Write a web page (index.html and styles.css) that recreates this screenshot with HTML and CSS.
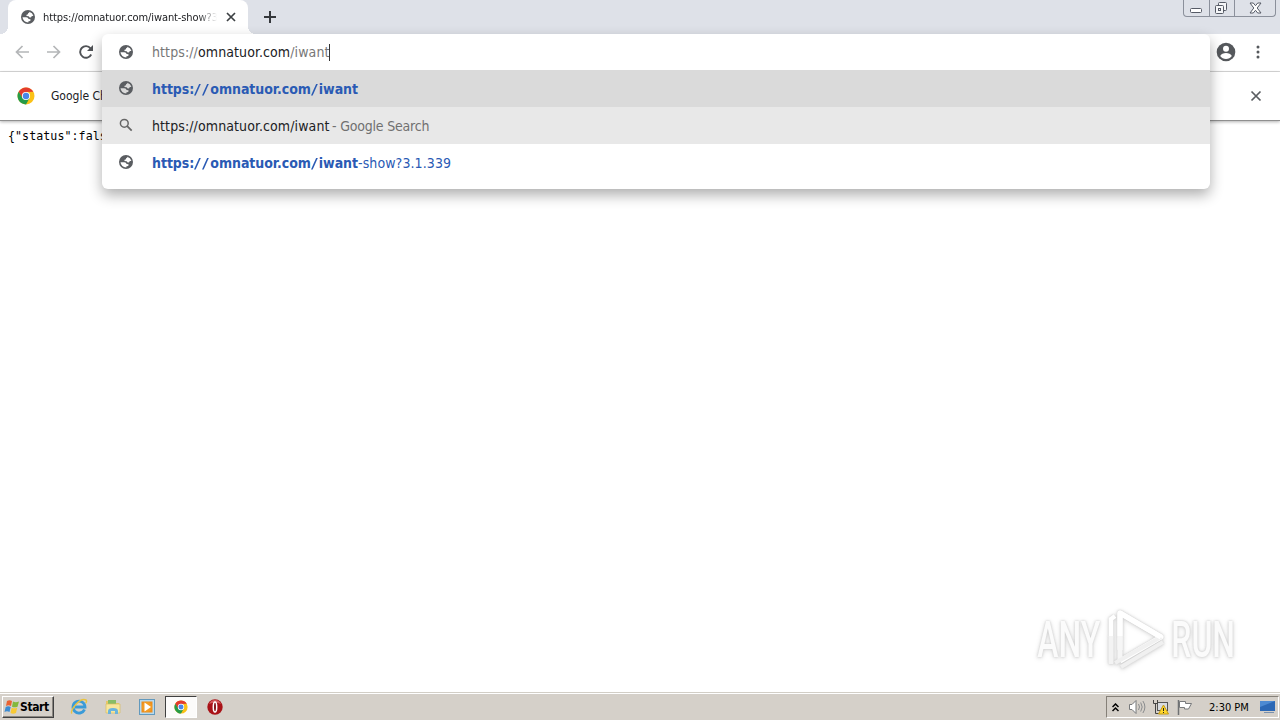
FILE: index.html
```
<!DOCTYPE html>
<html lang="en">
<head>
  <meta charset="UTF-8">
  <meta name="viewport" content="width=device-width, initial-scale=1.0">
  <title>omnatuor.com/iwant</title>
  <link rel="stylesheet" href="styles.css">
</head>
<body>
  <svg class="defs" width="0" height="0">
    <symbol id="globe" viewBox="0 0 16 16">
      <path fill="#5a5d61" fill-rule="evenodd" d="M8 1a7 7 0 1 0 0 14A7 7 0 1 0 8 1zM9.200 2.700Q12.500 3.500 13.400 6.800L11.600 7.200Q11.200 8.800 9.700 8.400L8.600 7.300 6.400 7 6.600 5.700 8 5.200 8.200 4 9.300 3.700zM2.500 8.200L6.300 8.200Q8.300 8.500 8.600 10L10.500 10.300 10.300 11.900 8.500 12.300 8.300 13.500Q3.200 13.200 2.500 8.200z"/>
    </symbol>
    <symbol id="chrome" viewBox="0 0 18 18">
      <circle cx="9" cy="9" r="8.500" fill="#fbc116"/>
      <path d="M9 9 5 11.300 1.640 4.750A8.500 8.500 0 0 1 16.360 4.750L9 5z" fill="#e33b2e"/>
      <path d="M1.640 4.750A8.500 8.500 0 0 0 9 17.500L12.600 11 9 9 5.500 11z" fill="#269b48"/>
      <circle cx="9" cy="9" r="4.100" fill="#fff"/>
      <circle cx="9" cy="9" r="3.200" fill="#4a86e8"/>
    </symbol>
  </svg>

  <div class="tabstrip">
    <div class="tab">
      <svg class="icon" width="16" height="16"><use href="#globe"/></svg>
      <span class="tab-title">https://omnatuor.com/iwant-show?3</span>
      <svg class="tab-close" width="10" height="10" viewBox="0 0 10 10"><path d="M1 1l8 8M9 1l-8 8" stroke="#3c4043" stroke-width="1.700"/></svg>
    </div>
    <svg class="new-tab" width="12" height="12" viewBox="0 0 12 12"><path d="M6 0v12M0 6h12" stroke="#35383c" stroke-width="2"/></svg>
    <div class="window-buttons">
      <span class="min"><svg width="13" height="6" viewBox="0 0 13 6"><rect x=".5" y=".5" width="11" height="4" rx="1" fill="#fff" stroke="#565b66"/></svg></span>
      <span class="restore"><svg width="14" height="14" viewBox="0 0 14 14"><g fill="#f5f6f8" stroke="#565b66"><rect x="4.500" y="1.500" width="8" height="8" rx="1"/><rect x="1.500" y="4.500" width="8" height="8" rx="1"/><rect x="4.500" y="7.500" width="2" height="2"/></g></svg></span>
      <span class="close"><svg width="13" height="12" viewBox="0 0 13 12"><path d="M1 1h3.300l2.200 2.700L8.700 1H12L8.200 6l3.800 5H8.700L6.500 8.300 4.300 11H1l3.800-5z" fill="#fff" stroke="#565b66"/></svg></span>
    </div>
  </div>

  <div class="toolbar">
    <svg width="14" height="14" viewBox="0 0 14 14"><path d="M14 7H1.500M7.500 1l-6 6 6 6" fill="none" stroke="#b4b6b8" stroke-width="1.700"/></svg>
    <svg width="14" height="14" viewBox="0 0 14 14"><path d="M0 7h12.500M6.500 1l6 6-6 6" fill="none" stroke="#b4b6b8" stroke-width="1.700"/></svg>
    <svg width="14" height="14" viewBox="0 0 14 14"><path d="M12.200 9.500a5.800 5.800 0 1 1-.7-6.200" fill="none" stroke="#505357" stroke-width="1.900"/><path d="M14 0v6H8z" fill="#505357"/></svg>
    <svg class="profile" width="20" height="20" viewBox="0 0 20 20"><circle cx="10" cy="10" r="9.300" fill="#55585c"/><circle cx="10" cy="6.800" r="3" fill="#fff"/><path d="M4.200 14c.6-2 3.500-3 5.800-3s5.200 1 5.800 3c-1.300 1.900-3.400 3-5.800 3s-4.500-1.100-5.800-3z" fill="#fff"/></svg>
    <svg class="menu" width="4" height="14" viewBox="0 0 4 14" fill="#55585c"><circle cx="2" cy="2" r="1.500"/><circle cx="2" cy="7" r="1.500"/><circle cx="2" cy="12" r="1.500"/></svg>
  </div>

  <div class="infobar">
    <svg width="18" height="18"><use href="#chrome"/></svg>
    <span class="infobar-text">Google Chrome</span>
    <svg class="infobar-close" width="12" height="12" viewBox="0 0 12 12"><path d="M1.500 1.500l9 9M10.500 1.500l-9 9" stroke="#5a5d61" stroke-width="1.700"/></svg>
  </div>

  <div class="page">
    <pre>{"status":false}</pre>
    <div class="watermark">
      <span>ANY</span>
      <svg width="60" height="66" viewBox="0 0 60 66">
        <path d="M15 44V7l41 24-41 24" fill="none" stroke="#fff" stroke-width="5" stroke-linejoin="round"/>
        <path d="M15 7v48" stroke="#f6f6f6" stroke-width="5"/>
        <path d="M6 57V13l4-3" fill="none" stroke="#fff" stroke-width="4.500"/>
        <path d="M6 30v28" stroke="#f3f3f3" stroke-width="4.500"/>
        <path d="M10 57l46-26M16 61l42-25" stroke="#f0f0f0" stroke-width="4"/>
        <path d="M15 30V7l41 24" fill="none" stroke="#fff" stroke-width="5" stroke-linejoin="round"/>
      </svg>
      <span>RUN</span>
    </div>
  </div>

  <div class="taskbar">
    <div class="start">
      <svg width="16" height="16" viewBox="0 0 16 16"><path d="M3 2q2.500-1.500 5 0L7 7q-2.500-1.300-5 0z" fill="#ea6232"/><path d="M9 2.500q2.500 1.300 6 0L13.500 7.700q-3 1.300-5.500 0z" fill="#83b83c"/><path d="M1.700 8q2.500-1.300 5 0l-1.200 5q-2.500-1.400-5 0z" fill="#3c8bd2"/><path d="M7.700 8.700q2.500 1.300 5.500 0L12 14q-3 1.300-5.500 0z" fill="#f8c934"/></svg>
      <span>Start</span>
    </div>
    <div class="quick">
      <svg width="18" height="18" viewBox="0 0 18 18"><path d="M14.500 11.500A6 6 0 1 1 15 9H5" fill="none" stroke="#3a9bd8" stroke-width="2.800"/><path d="M2 15.500C-1 13 10-1 16 2c1 .5.500 2-.3 3.200" fill="none" stroke="#e9c33f" stroke-width="1.400"/></svg>
    </div>
    <div class="quick">
      <svg width="18" height="18" viewBox="0 0 18 18"><path d="M2 3h5l1 2h7v9H2z" fill="#e8c765"/><path d="M4 2h8v4H4z" fill="#88bd66"/><path d="M2 6h14v9H2z" fill="#f7e69c" stroke="#d9bd62" stroke-width=".7"/><path d="M4 16v-3q0-3 5-3t5 3v3h-3v-3H7v3z" fill="#6ab4dd"/></svg>
    </div>
    <div class="quick">
      <svg width="18" height="18" viewBox="0 0 18 18"><rect x="1.500" y="1.500" width="15" height="15" fill="#b6d9ef" stroke="#6299bd"/><rect x="3.500" y="3.500" width="11" height="11" fill="#ee8d1b"/><circle cx="9" cy="9" r="5" fill="#f39c24"/><path d="M6.500 4.500v9L13 9z" fill="#fff"/></svg>
    </div>
    <div class="quick active">
      <svg width="14" height="14"><use href="#chrome"/></svg>
    </div>
    <div class="quick">
      <svg width="18" height="18" viewBox="0 0 18 18"><circle cx="9" cy="9" r="7.700" fill="#a91217"/><path d="M3 6a6.500 6.500 0 0 1 12 0q-6-3-12 0z" fill="#d3595a"/><ellipse cx="9" cy="9" rx="1.700" ry="5" fill="#7c0d10" stroke="#fff" stroke-width="1.500"/></svg>
    </div>
    <div class="tray">
      <svg class="chevrons" width="7" height="9" viewBox="0 0 7 9"><path d="M.5 4l3-3 3 3M.5 8l3-3 3 3" fill="none" stroke="#000" stroke-width="1.500"/></svg>
      <svg width="18" height="16" viewBox="0 0 18 16"><path d="M1.500 5.500H4L8 1.500v13l-4-4H1.500z" fill="#fff" stroke="#77797b"/><path d="M10.500 5q2 3 0 6M12.700 3.500q3 4.500 0 9M14.900 2q4 6 0 12" fill="none" stroke="#8a8c8e"/></svg>
      <svg width="18" height="16" viewBox="0 0 18 16"><rect x="5.500" y="3.500" width="10" height="8" fill="#d8dbe0" stroke="#555"/><path d="M1.500 1v3.500h4V1M3.500 4.500v10h4" fill="none" stroke="#444"/><path d="M11.500 6l5 9h-10z" fill="#ffd72c" stroke="#c49a13"/><path d="M11.500 9v3M11.500 13v1" stroke="#222"/></svg>
      <svg width="18" height="16" viewBox="0 0 18 16"><path d="M2.500 1v15" stroke="#6f7173" stroke-width="1.500"/><path d="M3.500 2.500h6v2h6l-3 5.500H8.500V8.500h-5z" fill="#fff" stroke="#77797b"/></svg>
      <span class="clock">2:30 PM</span>
      <svg class="desktop" width="18" height="14" viewBox="0 0 18 14"><path d="M1 1h15v10H1z" fill="#2c68b5"/><path d="M1 1h15L1 7z" fill="#4d8ad2"/><path d="M5 12.500h10" stroke="#7990ad"/></svg>
    </div>
  </div>

  <div class="omnibox">
    <div class="row input">
      <svg class="icon" width="16" height="16"><use href="#globe"/></svg>
      <span class="url"><i>https://</i>omnatuor.com<i>/iwant</i></span><span class="caret"></span>
    </div>
    <div class="row selected">
      <svg class="icon" width="16" height="16"><use href="#globe"/></svg>
      <span class="link"><b>https:<span class="slash">/</span><span class="slash">/</span>omnatuor.com<span class="slash">/</span>iwant</b></span>
    </div>
    <div class="row hovered">
      <svg class="icon" width="16" height="16" viewBox="0 0 16 16"><circle cx="6.300" cy="6.300" r="3.900" fill="none" stroke="#666" stroke-width="1.500"/><path d="M9.200 9.200l4.500 4.500" stroke="#666" stroke-width="1.800"/></svg>
      <span class="url">https://omnatuor.com/iwant</span><span class="hint">- Google Search</span>
    </div>
    <div class="row">
      <svg class="icon" width="16" height="16"><use href="#globe"/></svg>
      <span class="link"><b>https:<span class="slash">/</span><span class="slash">/</span>omnatuor.com<span class="slash">/</span>iwant</b><span class="rest">-show?3.1.339</span></span>
    </div>
  </div>
</body>
</html>
```
FILE: styles.css
```
* {
  box-sizing: border-box;
}

body {
  position: relative;
  display: flex;
  flex-direction: column;
  margin: 0;
  height: 720px;
  overflow: hidden;
  background-color: #fff;
  color: #202124;
  font-family: "DejaVu Sans Condensed", "DejaVu Sans", sans-serif;
  font-size: 11px;
  white-space: nowrap;
}

svg {
  display: block;
  flex-shrink: 0;
}

.defs {
  position: absolute;
}

.tabstrip {
  display: flex;
  height: 34px;
  padding-left: 8px;
  background-color: #dee1e8;
}

.tab {
  position: relative;
  display: flex;
  align-items: center;
  width: 240px;
  padding: 0 12px;
  border-radius: 8px 8px 0 0;
  background-color: #fff;
}

.tab::before,
.tab::after {
  content: "";
  position: absolute;
  bottom: 0;
  width: 8px;
  height: 8px;
}

.tab::before {
  left: -8px;
  background: radial-gradient(circle at 0 0, transparent 8px, #fff 8px);
}

.tab::after {
  right: -8px;
  background: radial-gradient(circle at 100% 0, transparent 8px, #fff 8px);
}

.tab-title {
  width: 176px;
  margin-left: 7px;
  overflow: hidden;
  letter-spacing: -0.1px;
  -webkit-mask-image: linear-gradient(to right, #000 155px, transparent);
  mask-image: linear-gradient(to right, #000 155px, transparent);
}

.tab-close {
  margin-left: 9px;
}

.new-tab {
  margin: 11px 0 0 16px;
}

.window-buttons {
  display: flex;
  width: 93px;
  height: 17px;
  margin: 0 4px 0 auto;
  border: 1px solid #8b909b;
  border-top: none;
  border-radius: 0 0 4px 4px;
}

.window-buttons span {
  display: flex;
  justify-content: center;
  align-items: center;
  width: 25px;
}

.window-buttons span + span {
  border-left: 1px solid #8b909b;
}

.window-buttons .min {
  padding-top: 5px;
}

.window-buttons .restore {
  padding-right: 2px;
}

.window-buttons .close {
  flex: 1;
}

.toolbar {
  display: flex;
  align-items: center;
  gap: 18px;
  height: 38px;
  padding: 0 20px 2px 15px;
  border-bottom: 1px solid #dadada;
}

.profile {
  margin-left: auto;
}

.menu {
  margin-left: 2px;
}

.infobar {
  display: flex;
  align-items: center;
  height: 49px;
  padding: 0 18px 0 17px;
  border-bottom: 1px solid #8f8f8f;
  box-shadow: 0 1px 3px rgba(0, 0, 0, 0.3);
}

.infobar-text {
  margin-left: 16px;
  font-size: 12px;
}

.infobar-close {
  margin-left: auto;
}

.page {
  position: relative;
  flex: 1;
}

pre {
  margin: 8px;
  color: #000;
  font-family: "DejaVu Sans Mono", monospace;
  font-size: 11.6px;
  line-height: 14px;
  letter-spacing: 0.08px;
}

.watermark {
  position: absolute;
  right: 46px;
  bottom: 19px;
  display: flex;
  align-items: center;
  gap: 5px;
  font-family: Roboto, sans-serif;
  font-size: 50px;
  font-weight: 500;
  line-height: 66px;
  filter: drop-shadow(0 0 1px #ccc) drop-shadow(0 1px 2px #ddd);
}

.watermark span {
  width: 64px;
  padding: 3px 0 0 2px;
  transform: scaleX(0.64);
  transform-origin: left;
  color: #fbfbfb;
}

.taskbar {
  display: flex;
  align-items: center;
  height: 28px;
  padding-top: 1px;
  border-top: 1px solid #d2cec6;
  background-color: #d5d0c9;
  box-shadow: inset 0 1px #fff;
  color: #000;
}

.start {
  display: flex;
  align-items: center;
  width: 52px;
  height: 22px;
  margin: 0 9px 0 2px;
  padding-left: 1px;
  border: 1px solid;
  border-color: #fff #404040 #404040 #fff;
  box-shadow: inset -1px -1px #8a8680;
  font-size: 12px;
  font-weight: bold;
  letter-spacing: -0.4px;
}

.quick {
  display: flex;
  justify-content: center;
  align-items: center;
  width: 32px;
  height: 22px;
  margin-right: 2px;
}

.quick.active {
  border: 1px solid;
  border-color: #404040 #fff #fff #404040;
  background-color: #fcfbfa;
}

.tray {
  display: flex;
  align-items: center;
  width: 173px;
  height: 22px;
  margin: 0 1px 0 auto;
  padding-left: 5px;
  border: 1px solid;
  border-color: #858078 #fff #fff #858078;
}

.tray svg {
  margin-right: 6px;
}

.tray .chevrons {
  margin-right: 9px;
}

.clock {
  width: 41px;
  margin-left: 9px;
}

.tray .desktop {
  margin: 0 0 0 9px;
}

.omnibox {
  position: absolute;
  top: 34px;
  left: 102px;
  width: 1108px;
  height: 155px;
  overflow: hidden;
  border-radius: 6px;
  background-color: #fff;
  box-shadow: 0 6px 14px rgba(0, 0, 0, 0.32);
}

.row {
  display: flex;
  align-items: center;
  height: 37px;
  padding-left: 16px;
  font-size: 14px;
}

.input {
  height: 36px;
}

.selected {
  background-color: #dadada;
}

.hovered {
  background-color: #e8e8e8;
}

.row .icon {
  margin: -2px 18px 0 0;
}

.input .icon {
  margin-top: 0;
}

.url {
  width: 177px;
  letter-spacing: 0.1px;
}

.url i {
  color: #777;
  font-style: normal;
}

.caret {
  width: 1px;
  height: 17px;
  background-color: #333;
}

.hint {
  margin-left: 3px;
  color: #707070;
  letter-spacing: -0.2px;
}

.link {
  color: #2a5ab4;
}

.link b {
  display: inline-block;
  width: 206px;
  letter-spacing: -0.05px;
}

.slash {
  display: inline-block;
  width: 8px;
  font-weight: normal;
  transform: scaleX(1.6);
  transform-origin: left;
}

.rest {
  letter-spacing: 0.1px;
}
```
